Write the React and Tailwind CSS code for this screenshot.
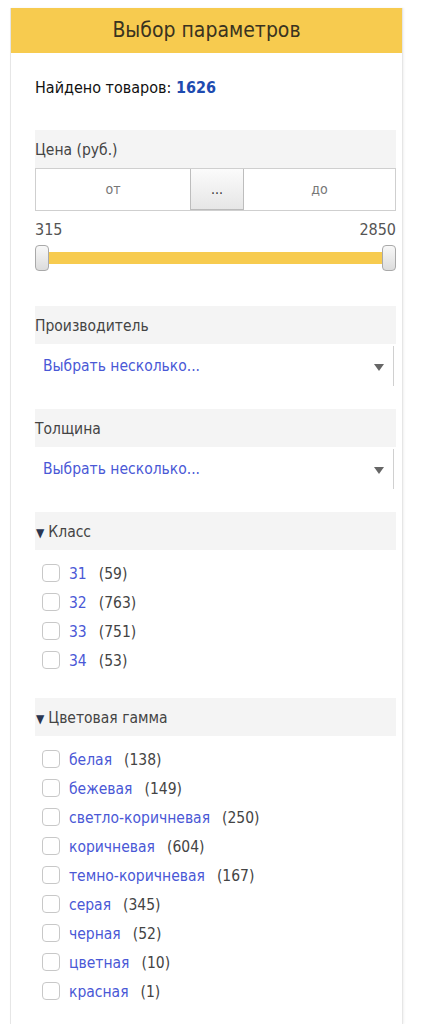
import React from "react";

const font = { fontFamily: '"Liberation Sans Narrow", "DejaVu Sans Condensed", "Roboto", sans-serif' };

function Header({ children, arrow }) {
  return (
    <div className="h-[38px] bg-[#f4f4f4] flex items-center pt-[3px] text-[15.5px] text-[#444]">
      {arrow && <span className="text-[12px] text-[#2a3550] ml-[1px] mr-[4px]">▼</span>}
      <span>{children}</span>
    </div>
  );
}

function Select() {
  return (
    <div className="h-[42px] flex items-center relative">
      <span className="ml-[8px] mt-[3px] text-[15.5px] text-[#4a58d6]">Выбрать несколько...</span>
      <span className="absolute right-[12px] top-[20px] w-0 h-0 border-l-[5px] border-r-[5px] border-t-[7px] border-l-transparent border-r-transparent border-t-[#666]"></span>
      <span className="absolute right-[2px] top-[2px] bottom-0 w-px bg-[#d0d0d0]"></span>
    </div>
  );
}

function Item({ label, count }) {
  return (
    <div className="h-[29px] flex items-center text-[15.5px]">
      <span className="ml-[7px] w-[18px] h-[18px] border border-[#c8c8c8] rounded-[4px] bg-white -mt-[4px]"></span>
      <span className="ml-[9px] text-[#4a58d6]">{label}</span>
      <span className="ml-[12px] text-[#444]">{count}</span>
    </div>
  );
}

export default function App() {
  const classes = [["31", "(59)"], ["32", "(763)"], ["33", "(751)"], ["34", "(53)"]];
  const colors = [
    ["белая", "(138)"], ["бежевая", "(149)"], ["светло-коричневая", "(250)"], ["коричневая", "(604)"],
    ["темно-коричневая", "(167)"], ["серая", "(345)"], ["черная", "(52)"], ["цветная", "(10)"], ["красная", "(1)"],
  ];
  return (
    <div className="min-h-[1024px] bg-white pt-[8px]" style={font}>
      <div className="ml-[10px] w-[393px] min-h-[1016px] border-x border-[#e6e6e6] shadow-[1px_0_2px_rgba(0,0,0,0.06)]">
        <div className="h-[45px] bg-[#f7cb4f] flex items-center justify-center text-[21px] text-[#3a3320]">Выбор параметров</div>
        <div className="pl-[24px] pr-[6px]">
          <div className="mt-[23px] h-[24px] flex items-center text-[16px] text-[#111]">
            Найдено товаров:&nbsp;<span className="font-bold text-[#1e4bb0] text-[16px]">1626</span>
          </div>
          <div className="mt-[30px]">
            <Header>Цена (руб.)</Header>
            <div className="flex h-[43px] border border-[#cfcfcf]">
              <div className="w-[154px] flex items-center justify-center text-[14px] text-[#777] bg-white">от</div>
              <div className="w-[54px] flex items-center justify-center text-[14px] text-[#333] bg-gradient-to-b from-[#fbfbfb] to-[#e6e6e6] border-x border-[#bdbdbd] shadow-[inset_0_-1px_0_#bbb]">...</div>
              <div className="flex-1 flex items-center justify-center text-[14px] text-[#777] bg-white">до</div>
            </div>
            <div className="flex justify-between mt-[9px] text-[16px] text-[#555] h-[20px] items-center">
              <span>315</span>
              <span>2850</span>
            </div>
            <div className="relative h-[26px] mt-[5px]">
              <div className="absolute left-[6px] right-[6px] top-[7px] h-[12px] bg-[#f7cb4f]"></div>
              <div className="absolute left-0 top-0 w-[14px] h-[26px] rounded-[4px] border border-[#a9a9a9] bg-gradient-to-b from-[#f8f8f8] to-[#dcdcdc]"></div>
              <div className="absolute right-0 top-0 w-[14px] h-[26px] rounded-[4px] border border-[#a9a9a9] bg-gradient-to-b from-[#f8f8f8] to-[#dcdcdc]"></div>
            </div>
          </div>
          <div className="mt-[35px]">
            <Header>Производитель</Header>
            <Select />
          </div>
          <div className="mt-[23px]">
            <Header>Толщина</Header>
            <Select />
          </div>
          <div className="mt-[23px]">
            <Header arrow>Класс</Header>
            <div className="pt-[10px]">
              {classes.map(([l, c]) => <Item key={l} label={l} count={c} />)}
            </div>
          </div>
          <div className="mt-[22px]">
            <Header arrow>Цветовая гамма</Header>
            <div className="pt-[10px]">
              {colors.map(([l, c]) => <Item key={l} label={l} count={c} />)}
            </div>
          </div>
        </div>
      </div>
    </div>
  );
}
